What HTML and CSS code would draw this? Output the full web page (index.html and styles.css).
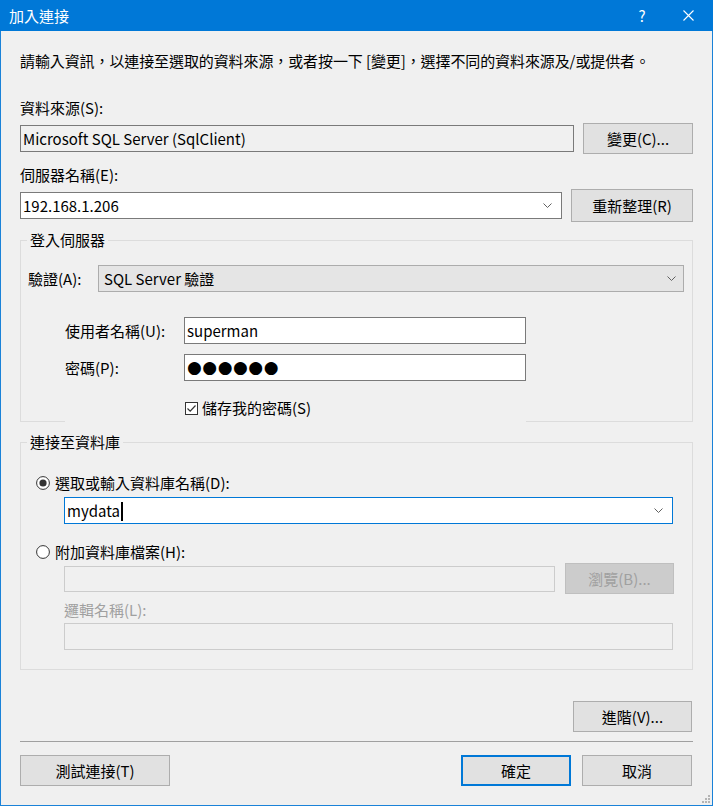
FILE: index.html
```html
<!DOCTYPE html>
<html lang="zh-Hant">
<head>
<meta charset="utf-8">
<title>加入連接</title>
<link rel="stylesheet" href="styles.css">
</head>
<body>
<div class="window">
  <div class="titlebar">
    <span class="title">加入連接</span>
    <span class="help">?</span>
    <span class="close"><svg width="11" height="11" viewBox="0 0 11 11"><path d="M0.5 0.5 L10.5 10.5 M10.5 0.5 L0.5 10.5" stroke="#fff" stroke-width="1.1" fill="none"/></svg></span>
  </div>
  <div class="content">
    <p class="intro">請輸入資訊，以連接至選取的資料來源，或者按一下 [變更]，選擇不同的資料來源及/或提供者。</p>

    <div class="label l-source">資料來源(S):</div>
    <div class="row row-source">
      <div class="field readonly src-field">Microsoft SQL Server (SqlClient)</div>
      <button class="btn btn-change">變更(C)...</button>
    </div>

    <div class="label l-server">伺服器名稱(E):</div>
    <div class="row row-server">
      <div class="field combo server-field"><span>192.168.1.206</span><svg class="chev" width="9" height="5" viewBox="0 0 9 5"><path d="M0.5 0.5 L4.5 4.5 L8.5 0.5" stroke="#606060" fill="none"/></svg></div>
      <button class="btn btn-refresh">重新整理(R)</button>
    </div>

    <fieldset class="group group-login">
      <legend>登入伺服器</legend>
      <div class="auth-row">
        <span class="auth-label">驗證(A):</span>
        <div class="field combo auth-field"><span>SQL Server 驗證</span><svg class="chev" width="9" height="5" viewBox="0 0 9 5"><path d="M0.5 0.5 L4.5 4.5 L8.5 0.5" stroke="#606060" fill="none"/></svg></div>
      </div>
      <div class="cred-row cred-user">
        <span class="cred-label">使用者名稱(U):</span>
        <div class="field cred-field">superman</div>
      </div>
      <div class="cred-row cred-pass">
        <span class="cred-label">密碼(P):</span>
        <div class="field cred-field pass">●●●●●●</div>
      </div>
      <div class="check-row">
        <svg class="checkbox" width="13" height="13" viewBox="0 0 13 13"><rect x="0.5" y="0.5" width="12" height="12" fill="#fff" stroke="#333"/><path d="M2.5 6.5 L5.2 9.2 L10.5 3.5" stroke="#333" stroke-width="1.2" fill="none"/></svg>
        <span>儲存我的密碼(S)</span>
      </div>
    </fieldset>

    <fieldset class="group group-db">
      <legend>連接至資料庫</legend>
      <div class="radio-row radio-first">
        <svg class="radio" width="14" height="14" viewBox="0 0 14 14"><circle cx="7" cy="7" r="6.4" fill="#fff" stroke="#333"/><circle cx="7" cy="7" r="3.6" fill="#333"/></svg>
        <span>選取或輸入資料庫名稱(D):</span>
      </div>
      <div class="field combo db-field focused"><span>mydata<i class="caret"></i></span><svg class="chev" width="9" height="5" viewBox="0 0 9 5"><path d="M0.5 0.5 L4.5 4.5 L8.5 0.5" stroke="#606060" fill="none"/></svg></div>
      <div class="radio-row radio-second">
        <svg class="radio" width="14" height="14" viewBox="0 0 14 14"><circle cx="7" cy="7" r="6.4" fill="#fff" stroke="#333"/></svg>
        <span>附加資料庫檔案(H):</span>
      </div>
      <div class="browse-row">
        <div class="field disabled file-field"></div>
        <button class="btn btn-disabled btn-browse">瀏覽(B)...</button>
      </div>
      <div class="label disabled-label">邏輯名稱(L):</div>
      <div class="field disabled logic-field"></div>
    </fieldset>

    <div class="adv-row">
      <button class="btn btn-adv">進階(V)...</button>
    </div>
    <div class="separator"></div>
    <div class="bottom-row">
      <button class="btn btn-test">測試連接(T)</button>
      <div class="spacer"></div>
      <button class="btn btn-ok">確定</button>
      <button class="btn btn-cancel">取消</button>
    </div>
  </div>
  <svg class="grip" width="8" height="8" viewBox="0 0 8 8"><g fill="#b4b4b4"><rect x="6" y="0" width="2" height="2"/><rect x="3" y="3" width="2" height="2"/><rect x="6" y="3" width="2" height="2"/><rect x="0" y="6" width="2" height="2"/><rect x="3" y="6" width="2" height="2"/><rect x="6" y="6" width="2" height="2"/></g></svg>
</div>
</body>
</html>
```

FILE: styles.css
```css
* { box-sizing: border-box; }
html, body { margin: 0; padding: 0; }
body {
  width: 713px;
  height: 806px;
  overflow: hidden;
  background: #f0f0f0;
  font-family: "Noto Sans CJK TC", "Noto Sans", sans-serif;
  font-size: 15px;
  color: #000;
}
.window {
  position: relative;
  width: 713px;
  height: 806px;
  background: #f0f0f0;
  border: 1px solid #1a82d8;
  border-top: none;
}
.titlebar {
  height: 31px;
  margin: 0 -1px;
  background: #0078d7;
  color: #fff;
  display: flex;
  align-items: center;
  padding-left: 9px;
}
.title { line-height: 20px; flex: 1; }
.help { width: 46px; text-align: center; font-size: 15px; }
.close { width: 46px; display: flex; justify-content: center; align-items: center; margin-right: 2px; }

.content {
  padding: 20px 19px 0 19px;
}
.intro { margin: 0; line-height: 20px; white-space: nowrap; letter-spacing: -0.1px; }
.label { line-height: 20px; }
.l-source { margin-top: 27px; }
.l-server { margin-top: 11px; }
.row { display: flex; align-items: center; }
.row-source { margin-top: 5px; height: 31px; }
.row-server { margin-top: 4px; height: 33px; }

.field {
  background: #fff;
  border: 1px solid #7a7a7a;
  height: 27px;
  line-height: 25px;
  padding-left: 2px;
  white-space: nowrap;
}
.field.readonly { background: #f0f0f0; }
.combo { display: flex; align-items: center; justify-content: space-between; padding-right: 9px; }
.combo span { line-height: 25px; }
.chev { flex: none; }

.src-field { width: 554px; }
.btn {
  font-family: inherit;
  font-size: 15px;
  color: #000;
  background: #e1e1e1;
  border: 1px solid #adadad;
  padding: 0;
  height: 31px;
  line-height: 29px;
}
.btn-change { width: 110px; margin-left: 9px; }
.server-field { width: 542px; }
.btn-refresh { width: 122px; height: 33px; margin-left: 9px; }

.group {
  margin: 0;
  padding: 0;
  border: 1px solid #dcdcdc;
  min-inline-size: 0;
}
.group legend {
  margin-left: 6px;
  padding: 0 3px;
  line-height: 20px;
}
.group-login {
  margin-top: 8px;
  padding-bottom: 4px;
  border-bottom: none;
  background-image: linear-gradient(to right, #dcdcdc 0 44px, transparent 44px 505px, #dcdcdc 505px);
  background-size: 100% 1px;
  background-position: bottom left;
  background-repeat: no-repeat;
}
.auth-row {
  display: flex;
  align-items: center;
  margin-top: 15px;
  padding-left: 7px;
}
.auth-label { width: 70px; line-height: 20px; }
.auth-field {
  width: 586px;
  background: #e5e5e5;
  border-color: #acacac;
  padding-left: 5px;
  padding-right: 7px;
}
.cred-row { display: flex; align-items: center; padding-left: 44px; }
.cred-user { margin-top: 25px; }
.cred-pass { margin-top: 10px; }
.cred-label { width: 119px; line-height: 20px; }
.cred-field { width: 342px; }
.pass { font-size: 17px; letter-spacing: 0.5px; line-height: 25px; padding-left: 2px; font-family: "DejaVu Sans", sans-serif; }
.check-row {
  display: flex;
  align-items: center;
  margin-top: 17px;
  padding-left: 164px;
  line-height: 20px;
}
.checkbox { margin-right: 4px; flex: none; }

.group-db { margin-top: 10px; padding-bottom: 19px; }
.radio-row { display: flex; align-items: center; line-height: 20px; padding-left: 15px; }
.radio { margin-right: 5px; flex: none; }
.radio-first { margin-top: 21px; }
.db-field {
  margin-top: 4px;
  margin-left: 43px;
  width: 609px;
  border-color: #0078d7;
}
.caret { display: inline-block; width: 2px; height: 19px; background: #000; vertical-align: -4px; margin-left: 1px; }
.radio-second { margin-top: 18px; }
.browse-row { display: flex; align-items: center; margin-top: 1px; margin-left: 43px; height: 31px; }
.field.disabled { background: #f0f0f0; border-color: #cccccc; }
.file-field { width: 491px; height: 26px; }
.btn-disabled { background: #cccccc; border-color: #bfbfbf; color: #a0a0a0; }
.btn-browse { width: 109px; margin-left: 10px; }
.disabled-label { color: #a0a0a0; margin-top: 6px; margin-left: 43px; }
.logic-field { margin-top: 3px; margin-left: 43px; width: 609px; }

.adv-row { display: flex; justify-content: flex-end; margin-top: 31px; padding-right: 1px; }
.btn-adv { width: 119px; }
.separator { margin-top: 9px; height: 1px; background: #a0a0a0; }
.bottom-row { display: flex; margin-top: 13px; padding-right: 1px; }
.spacer { flex: 1; }
.btn-test { width: 150px; }
.btn-ok { width: 110px; border: 2px solid #0078d7; line-height: 27px; }
.btn-cancel { width: 110px; margin-left: 11px; }

.grip { position: absolute; right: 2px; bottom: 2px; }
```
